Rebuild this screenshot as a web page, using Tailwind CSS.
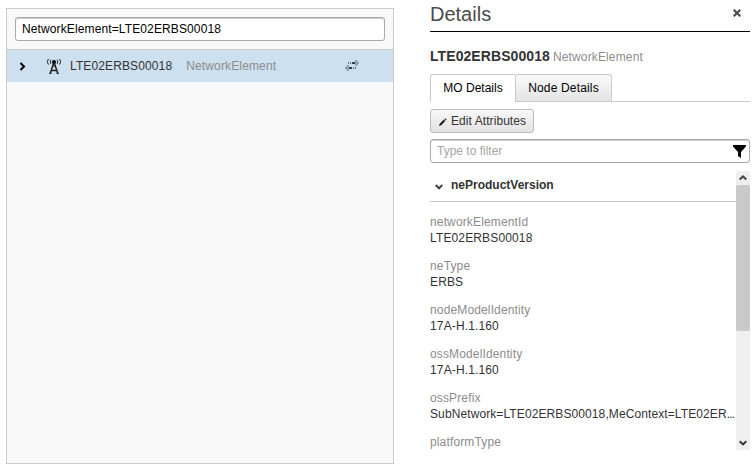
<!DOCTYPE html>
<html lang="en">
<head>
<meta charset="utf-8">
<title>Details</title>
<script src="https://cdn.jsdelivr.net/npm/@tailwindcss/browser@4"></script>
</head>
<body class="w-[755px] h-[468px] overflow-hidden bg-white font-['Liberation_Sans',Arial,sans-serif] text-[12px] leading-4 text-[#333]">
<div class="flex pl-1.5">
  <section class="mt-2 w-[388px] h-[456px] border border-[#ccc] bg-[#f8f8f8]">
    <div class="h-[41px] px-2 pt-2 border-b border-[#ccc]">
      <div class="h-6 w-[370px] flex items-center px-1.5 bg-white border border-[#aaa] rounded-[3px] text-black shadow-[inset_0_1px_0_#ccc]"><span class="tracking-[0.12px]">NetworkElement=LTE02ERBS00018</span></div>
    </div>
    <div class="h-8 flex items-center bg-[#cde0ef] pl-[12px]">
      <svg class="w-[7px] h-[9px] shrink-0" viewBox="0 0 7 9" fill="none" stroke="#000" stroke-width="2"><path d="M1.500 1 5 4.500 1.500 8"/></svg>
      <svg class="ml-5 w-4 h-4 shrink-0" viewBox="0 0 16 16" fill="none" stroke="#222"><path d="M7.500 5.500 4.200 15.500M8.500 5.500l3.300 10M5.200 12.500h5.600" stroke-width="1.500"/><path d="M3.200 15.400h2.300M10.500 15.400h2.300M6.500 8h3" stroke-width="1"/><circle cx="8" cy="4" r="2" fill="#000" stroke="none"/><path d="M4.900 1.800Q3.700 3.800 4.900 5.800M11.100 1.800Q12.300 3.800 11.100 5.800" stroke-width="1"/><path d="M2.400 1Q.300 3.800 2.400 6.600M13.600 1Q15.700 3.800 13.600 6.600" stroke-width="1"/></svg>
      <span class="ml-2 tracking-[0.12px]">LTE02ERBS00018</span>
      <span class="ml-[14px] text-[#8c8c8c] tracking-[0.14px]">NetworkElement</span>
      <svg class="ml-auto mr-[34px] w-[14px] h-[12px] shrink-0" viewBox="0 0 14 12" shape-rendering="crispEdges"><path d="M10 0h2v1h1v1h1v2h-1v1h-1v1h-2zM4 5H2v1H1v1H0v2h1v1h1v1h2z" fill="#94a3ae"/><path d="M3 2h1v2H3zM5 2h1v2H5zM8 7h1v2H8zM10 7h1v2h-1z" fill="#68747c"/><path d="M7 2h3v2H7zM4 7h3v2H4z" fill="#3a3f43"/></svg>
    </div>
  </section>

  <aside class="ml-9 w-80">
    <header class="h-8 flex justify-between border-b border-black">
      <h1 class="text-[20px] leading-7 text-[#4b4b4b]">Details</h1>
      <svg class="mt-[9px] mr-[9px] w-2 h-2" viewBox="0 0 8 8" stroke="#4d4d4d" stroke-width="2.200"><path d="M.7.700l6.600 6.600M7.300.700.700 7.300"/></svg>
    </header>
    <div class="mt-[14px] h-5 flex items-baseline gap-[3px]"><b class="text-[14px] leading-5 tracking-[0.08px]">LTE02ERBS00018</b><span class="text-[#8c8c8c] tracking-[0.14px]">NetworkElement</span></div>
    <nav class="mt-2 h-7 flex border-b border-[#ccc] text-black">
      <div class="w-[85px] h-7 flex justify-center pt-[5px] bg-white border-t border-l border-[#ccc] rounded-tl-[3px]"><span>MO Details</span></div>
      <div class="w-[97px] h-[27px] flex justify-center pt-[5px] border border-b-0 border-[#ccc] rounded-t-[3px] bg-linear-to-b from-[#fafafa] to-[#e4e4e4]"><span class="tracking-[0.16px]">Node Details</span></div>
    </nav>
    <button class="mt-[7px] w-[104px] h-6 flex items-center pl-2 border border-[#bbb] rounded-[3px] bg-linear-to-b from-[#f8f8f8] to-[#e3e3e3]">
      <svg class="w-2 h-2 mt-px" viewBox="0 0 8 8" fill="#222"><path d="M0 8l.700-2.300L4.800 1.600l1.500 1.500L2.300 7.300zM5.400 1 6.200.200 7.800 1.700l-.800.800z"/></svg>
      <span class="ml-1 tracking-[0.07px]">Edit Attributes</span>
    </button>
    <div class="mt-1.5 h-6 flex items-center justify-between pl-1.5 pr-[3px] border border-[#aaa] rounded-[3px] text-[#a5a5a5] shadow-[inset_0_1px_0_#ccc]">
      <span>Type to filter</span>
      <svg class="w-[13px] h-[13px]" viewBox="0 0 13 13"><path d="M0 0h13v1.500L8 7v6l-3-2V7L0 1.500z"/></svg>
    </div>
    <div class="mt-2 flex h-[279px]">
      <div class="w-[306px] overflow-hidden">
        <h2 class="h-[31px] flex items-center border-b border-[#ccc] pl-[5px] pb-[2px]">
          <svg class="w-2 h-[6px] mt-[3px] mr-2" viewBox="0 0 8 6" fill="none" stroke="#444" stroke-width="2"><path d="M.7 1 4 4.300 7.300 1"/></svg>
          <b>neProductVersion</b>
        </h2>
        <dl class="mt-3 flex flex-col gap-3 tracking-[0.14px] [&_dt]:text-[#8c8c8c]">
          <div><dt>networkElementId</dt><dd>LTE02ERBS00018</dd></div>
          <div><dt>neType</dt><dd>ERBS</dd></div>
          <div><dt>nodeModelIdentity</dt><dd>17A-H.1.160</dd></div>
          <div><dt>ossModelIdentity</dt><dd>17A-H.1.160</dd></div>
          <div><dt>ossPrefix</dt><dd class="whitespace-nowrap tracking-[0.1px]">SubNetwork=LTE02ERBS00018,MeContext=LTE02ER<span class="tracking-[-0.8px]">...</span></dd></div>
          <div><dt>platformType</dt></div>
        </dl>
      </div>
      <div class="w-[14px] flex flex-col items-center bg-[#efefef] rounded-[2px]">
        <svg class="mt-1 w-2 h-[6px] shrink-0" viewBox="0 0 8 6" fill="none" stroke="#444" stroke-width="2"><path d="M.7 4.500 4 1.400 7.300 4.500"/></svg>
        <div class="mt-1 w-[14px] h-[146px] bg-[#c9c9c9] rounded-[2px]"></div>
        <svg class="mt-auto mb-1 w-2 h-[6px] shrink-0" viewBox="0 0 8 6" fill="none" stroke="#333" stroke-width="2"><path d="M.7 1.300 4 4.400 7.300 1.300"/></svg>
      </div>
    </div>
  </aside>
</div>
</body>
</html>
